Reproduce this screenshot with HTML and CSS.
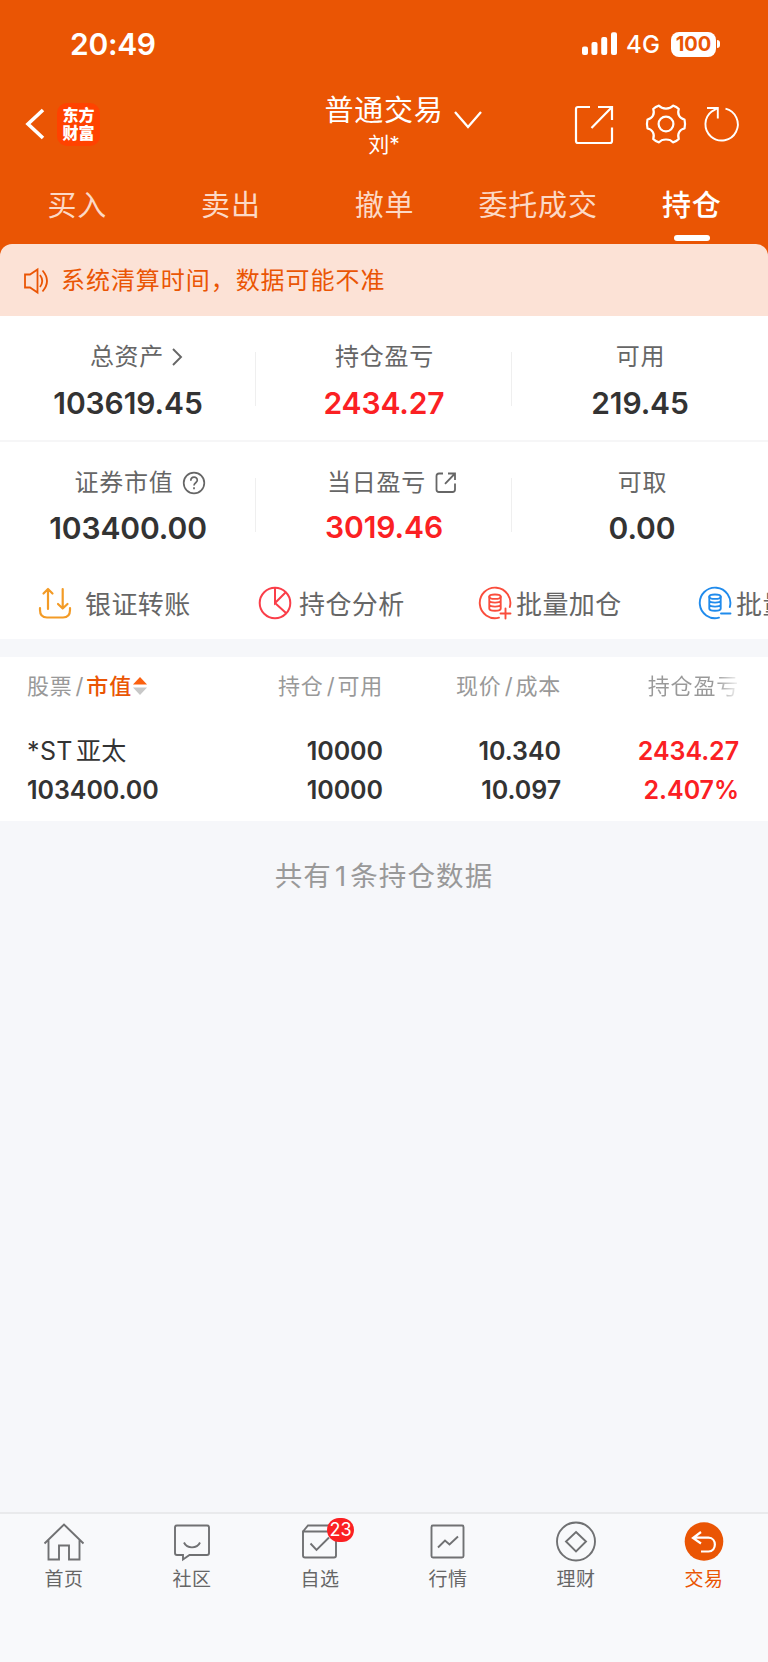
FILE: index.html
```html
<!DOCTYPE html>
<html lang="zh-CN">
<head>
<meta charset="utf-8">
<title>持仓</title>
<link rel="stylesheet" href="styles.css">
</head>
<body>
<div class="app">
  <header class="header">
    <div class="status">
      <span class="time">20:49</span>
      <svg class="signal" width="36" height="24" viewBox="0 0 36 24" fill="#fff"><rect x="0" y="14.500" width="6" height="8.500" rx="2"/><rect x="9.500" y="10" width="6" height="13" rx="2"/><rect x="19.200" y="5" width="6" height="18" rx="2"/><rect x="29" y="0.300" width="6" height="22.700" rx="2"/></svg>
      <span class="net">4G</span>
      <span class="battery">100</span>
      <span class="nub"></span>
    </div>
    <div class="nav">
      <svg class="back" width="20" height="34" viewBox="0 0 20 34" fill="none" stroke="#fff" stroke-width="3.600"><path d="M18 3 3 17 18 31"/></svg>
      <div class="logo"><span>东方</span><span>财富</span></div>
      <div class="heading">
        <div class="title">普通交易</div>
        <div class="user">刘*</div>
      </div>
      <svg class="caret" width="30" height="20" viewBox="0 0 30 20" fill="none" stroke="#fff" stroke-width="2.300"><path d="M2 2 15 17 28 2"/></svg>
      <svg class="share" width="40" height="40" viewBox="0 0 40 40" fill="none" stroke="#fff" stroke-width="2.200"><path d="M16 2H4Q2 2 2 4V36Q2 38 4 38H36Q38 38 38 36V22.500M24 2H38V15M38 2 17.500 23"/></svg>
      <svg class="gear" width="42" height="42" viewBox="0 0 42 42" fill="none" stroke="#fff" stroke-width="2.200" stroke-linejoin="round"><path d="M14 2.600C17 6.500 25 6.500 28 2.600Q31.500 3.600 33.800 6C32 11 34.500 15.500 39.500 16.500Q40.600 21 39.500 25.500C34.500 26.500 32 31 33.800 36Q31.500 38.400 28 39.400C25 35.500 17 35.500 14 39.400Q10.500 38.400 8.200 36C10 31 7.500 26.500 2.500 25.500Q1.400 21 2.500 16.500C7.500 15.500 10 11 8.200 6Q10.500 3.600 14 2.600Z"/><circle cx="21" cy="21" r="7.400"/></svg>
      <svg class="refresh" width="38" height="38" viewBox="0 0 38 38" fill="none" stroke="#fff" stroke-width="1.900"><path d="M22.500 3.600A16.200 16.200 0 1 1 9 6.300M4 3H14.800V13.500M14.800 3 9 6.300"/></svg>
    </div>
    <nav class="tabs">
      <span>买入</span><span>卖出</span><span>撤单</span><span>委托成交</span><span class="on">持仓</span>
    </nav>
  </header>
  <div class="noticewrap">
    <div class="notice">
      <svg width="28" height="28" viewBox="0 0 28 28" fill="none" stroke="#ea5504" stroke-width="1.800"><path d="M2 7.500H7L14.500 2.500V25.500L7 20.500H2ZM17 8Q21.500 14 17 20M19.500 3.500Q28.500 14 19.500 24.500"/></svg>
      <span>系统清算时间，数据可能不准</span>
    </div>
  </div>
  <section class="stats">
    <div class="stat"><div class="label shift">总资产<svg class="more" width="12" height="20" viewBox="0 0 12 20" fill="none" stroke="#666" stroke-width="1.900"><path d="M2 2 10 10 2 18"/></svg></div><div class="value">103619.45</div></div>
    <div class="stat"><div class="label">持仓盈亏</div><div class="value red">2434.27</div></div>
    <div class="stat"><div class="label">可用</div><div class="value">219.45</div></div>
  </section>
  <section class="stats second">
    <div class="stat"><div class="label wide">证券市值<svg class="help" width="24" height="24" viewBox="0 0 24 24" fill="none" stroke="#666" stroke-width="1.700"><circle cx="12" cy="12" r="10.300"/><path d="M8.800 9.700C8.800 5 15.300 5 15.300 9.300C15.300 11.800 12 11.800 12 14.500M12 16.300V18.300"/></svg></div><div class="value">103400.00</div></div>
    <div class="stat"><div class="label shift">当日盈亏<svg class="open" width="24" height="24" viewBox="0 0 24 24" fill="none" stroke="#666" stroke-width="1.800"><path d="M9 2.500H5Q2.500 2.500 2.500 5V18.500Q2.500 21 5 21H18.500Q21 21 21 18.500V12.500M14 2.500H21V9M21 2.500 11 12.800"/></svg></div><div class="value red up">3019.46</div></div>
    <div class="stat last"><div class="label">可取</div><div class="value">0.00</div></div>
  </section>
  <section class="actions">
    <div class="action first"><svg width="34" height="34" viewBox="0 0 34 34" fill="none" stroke="#f39b26" stroke-width="2.200" stroke-linecap="round" stroke-linejoin="round"><path d="M2 22V24Q2 31.500 9 31.500H25Q32 31.500 32 24V22M10 23V3M5.500 7.500 10 3 14.500 7.500M24.700 3V22.500M20 18 24.700 22.500 29.500 18"/></svg><span>银证转账</span></div>
    <div class="action"><svg width="34" height="34" viewBox="0 0 34 34" fill="none" stroke="#fa3e49" stroke-width="2"><circle cx="17" cy="17" r="15.300"/><path d="M17 1.700V17L27.500 6.500M17 17 28 27"/></svg><span>持仓分析</span></div>
    <div class="action tight"><svg width="34" height="34" viewBox="0 0 34 34" fill="none" stroke="#fa4d3c" stroke-width="1.900" stroke-linecap="round"><path d="M21 31.700A15.300 15.300 0 1 1 31.800 21M27.500 22.500V32.500M22.500 27.500H32.500"/><ellipse cx="17" cy="10.700" rx="5.700" ry="2.200"/><path d="M11.300 10.700V22.500C11.300 25.500 22.700 25.500 22.700 22.500V10.700M11.300 14.500C11.300 17.300 22.700 17.300 22.700 14.500M11.300 18.500C11.300 21.300 22.700 21.300 22.700 18.500"/></svg><span>批量加仓</span></div>
    <div class="action tight"><svg width="34" height="34" viewBox="0 0 34 34" fill="none" stroke="#208bec" stroke-width="1.900" stroke-linecap="round"><path d="M21 31.700A15.300 15.300 0 1 1 31.800 21M23 27.500H32.500"/><ellipse cx="17" cy="10.700" rx="5.700" ry="2.200"/><path d="M11.300 10.700V22.500C11.300 25.500 22.700 25.500 22.700 22.500V10.700M11.300 14.500C11.300 17.300 22.700 17.300 22.700 14.500M11.300 18.500C11.300 21.300 22.700 21.300 22.700 18.500"/></svg><span>批量减仓</span></div>
  </section>
  <section class="table">
    <div class="row head">
      <span class="sort">股票<i>/</i><b>市值</b><svg width="14" height="20" viewBox="0 0 14 20"><path d="M0 8.500 7 1 14 8.500Z" fill="#fb600f"/><path d="M0 11.500H14L7 19Z" fill="#c8c8c8"/></svg></span>
      <span>持仓<i>/</i>可用</span><span>现价<i>/</i>成本</span><span class="fade">持仓盈亏</span>
    </div>
    <div class="row name"><span class="stock">*ST<em>亚太</em></span><span>10000</span><span>10.340</span><span class="red">2434.27</span></div>
    <div class="row"><span>103400.00</span><span>10000</span><span>10.097</span><span class="red">2.407%</span></div>
  </section>
  <main class="count">共有<i>1</i>条持仓数据</main>
  <footer class="bar">
    <div class="item"><svg width="42" height="42" viewBox="0 0 42 42"><path d="M1.500 22.500 21 3.500 40.500 22.500M5.500 19V38.500H16V24.500H26V38.500H36.500V19"/></svg><span>首页</span></div>
    <div class="item"><svg width="42" height="42" viewBox="0 0 42 42"><path d="M6 4.500H36Q38 4.500 38 6.500V32Q38 34 36 34H18.500L12 38.500V34H6Q4 34 4 32V6.500Q4 4.500 6 4.500ZM13 21.500C16 28 26 28 29 21.500"/></svg><span>社区</span></div>
    <div class="item"><svg width="42" height="42" viewBox="0 0 42 42"><path d="M4 10.500 9 4.500H33L37 10.500V34.500Q37 36.500 35 36.500H6Q4 36.500 4 34.500V10.500H37M11.500 22.500 17.500 29 30 16.500"/></svg><span class="badge">23</span><span>自选</span></div>
    <div class="item"><svg width="42" height="42" viewBox="0 0 42 42"><rect x="4.500" y="4.500" width="32" height="32" rx="1.500"/><path d="M11 26.500 18 19.500 22.500 23.500 31 15.500"/></svg><span>行情</span></div>
    <div class="item"><svg width="42" height="42" viewBox="0 0 42 42"><circle cx="21" cy="20.500" r="19"/><path d="M21 11 31 20.500 21 30.500 11 20.500Z"/></svg><span>理财</span></div>
    <div class="item on"><svg width="42" height="42" viewBox="0 0 42 42"><circle class="disc" cx="21" cy="20.500" r="19.300"/><path class="arrow" d="M18 11 10 17 18 22.500M11 16.700H25.500C34 16.700 34 30.500 25.500 30.500H18"/></svg><span>交易</span></div>
  </footer>
</div>
</body>
</html>
```

FILE: styles.css
```css
* { box-sizing: border-box; }
body { margin: 0; font-family: Inter, "Noto Sans CJK SC", sans-serif; color: #333; background: #f6f7fa; }
i, em { font-style: normal; }
svg { display: block; flex: none; }
.app { width: 768px; height: 1662px; overflow: hidden; display: flex; flex-direction: column; }

.header { height: 244px; flex: none; background: #ea5504; color: #fff; }
.status { height: 88px; display: flex; align-items: center; padding-left: 70px; }
.time { width: 512px; font-size: 30px; font-weight: 600; letter-spacing: -.3px; line-height: 40px; }
.signal { margin-right: 8px; }
.net { width: 46px; margin-top: 1px; font-size: 24px; font-weight: 500; letter-spacing: .2px; }
.battery { width: 45px; height: 25px; margin-left: -1px; border-radius: 8px; background: #fff; color: #ea5504; font-size: 20px; font-weight: 700; line-height: 25px; text-align: center; }
.nub { width: 3px; height: 8px; margin-left: 1px; border-radius: 0 4px 4px 0; background: #fff; }
.nav { height: 72px; display: flex; align-items: center; padding-left: 25px; }
.back { margin-right: 12px; }
.logo { width: 43px; height: 43px; margin-right: 224px; padding-top: 3px; border-radius: 10px; background: #ff4200; display: flex; flex-direction: column; align-items: center; font-size: 16px; font-weight: 900; line-height: 18px; }
.heading { width: 120px; display: flex; flex-direction: column; align-items: center; }
.title { height: 38px; margin-top: 3px; font-size: 29px; line-height: 40px; letter-spacing: .8px; }
.user { height: 32px; font-size: 21px; line-height: 32px; }
.caret { margin: -8px 0 0 9px; }
.share { margin-left: 91px; margin-top: 2px; }
.gear { margin-left: 31px; }
.refresh { margin-left: 16px; }
.tabs { height: 84px; display: grid; grid-template-columns: repeat(5, 1fr); }
.tabs span { padding: 25px 0 0 1px; text-align: center; font-size: 29px; line-height: 42px; letter-spacing: .8px; color: #fcd9c6; }
.tabs .on { color: #fff; font-weight: 500; display: flex; flex-direction: column; align-items: center; }
.tabs .on::after { content: ""; width: 36px; height: 6px; margin-top: 8px; border-radius: 3px; background: #fff; }

.noticewrap { flex: none; background: #ea5504; }
.notice { height: 72px; padding: 2px 0 0 23px; display: flex; align-items: center; border-radius: 12px 12px 0 0; background: #fce2d6; color: #ea5504; }
.notice span { margin-left: 10px; font-size: 24px; line-height: 36px; letter-spacing: .95px; }

.stats { flex: none; height: 126px; padding-top: 22px; display: grid; grid-template-columns: repeat(3, 1fr); background: #fff; border-bottom: 2px solid #f6f6f7; }
.stats.second { height: 125px; border: 0; }
.stat { display: flex; flex-direction: column; align-items: center; background: linear-gradient(#efefef, #efefef) right 14px / 1px 54px no-repeat; }
.stat:last-child { background: none; }
.last { padding-left: 4px; }
.label { height: 37px; padding: 1px 0 0 1px; display: flex; align-items: center; font-size: 24px; line-height: 36px; letter-spacing: .75px; color: #666; }
.label.shift { padding-left: 17px; }
.label.wide { padding-left: 24px; }
.more { margin-left: 7px; }
.help { margin-left: 8px; }
.open { margin-left: 8px; }
.value { margin-top: 9px; font-size: 30px; line-height: 38px; font-weight: 600; letter-spacing: -.1px; }
.second .value { margin-top: 8px; }
.second .up { margin-top: 7px; }
.red { color: #fb2023 !important; }

.actions { flex: none; height: 72px; padding-left: 38px; display: flex; background: #fff; overflow: hidden; }
.action { flex: none; width: 220px; height: 72px; display: flex; align-items: center; gap: 7px; color: #666; font-size: 26px; letter-spacing: .4px; }
.action span { margin-top: -2px; }
.first { gap: 13px; }
.tight { gap: 4px; }

.table { flex: none; height: 182px; padding-top: 10px; border-top: 18px solid #f6f7fa; background: #fff; }
.row { height: 39px; display: grid; grid-template-columns: 182px 174px 178px 178px; padding-left: 27px; line-height: 40px; text-align: right; font-size: 25px; font-weight: 600; letter-spacing: -.05px; }
.row span:first-child { text-align: left; }
.head { height: 64px; line-height: 38px; font-size: 22px; font-weight: 400; letter-spacing: .8px; color: #999; }
.head i { margin: 0 2px 0 3px; }
.head b { font-weight: 500; color: #ea5504; }
.sort { display: flex; }
.sort svg { margin: 9px 0 0 1px; }
.fade { background: linear-gradient(90deg, #999 0 155px, #fff 180px); background-clip: text; -webkit-background-clip: text; color: transparent; }
.name .stock { font-weight: 400; letter-spacing: .4px; }
.stock em { margin-left: 3px; }

.count { flex: 1; padding-top: 34px; text-align: center; font-size: 27.500px; line-height: 42px; letter-spacing: 1.1px; color: #999; }
.count i { margin: 0 3px; }
.bar { flex: none; height: 150px; padding-top: 7px; display: grid; grid-template-columns: repeat(6, 1fr); border-top: 2px solid #e9eaec; background: #f8f9fb; }
.item { position: relative; display: flex; flex-direction: column; align-items: center; font-size: 19px; line-height: 28px; letter-spacing: .5px; color: #666; }
.item svg { margin-bottom: 3px; fill: none; stroke: #707173; stroke-width: 1.900; }
.item .disc { fill: #ea5504; stroke: none; }
.item .arrow { stroke: #fff; stroke-width: 2.200; }
.item.on { color: #ea5504; }
.badge { position: absolute; left: 71px; top: -3px; width: 27px; height: 24px; border-radius: 12px; background: #fb2023; color: #fff; font-size: 18px; line-height: 24px; text-align: center; letter-spacing: 0; }
```
